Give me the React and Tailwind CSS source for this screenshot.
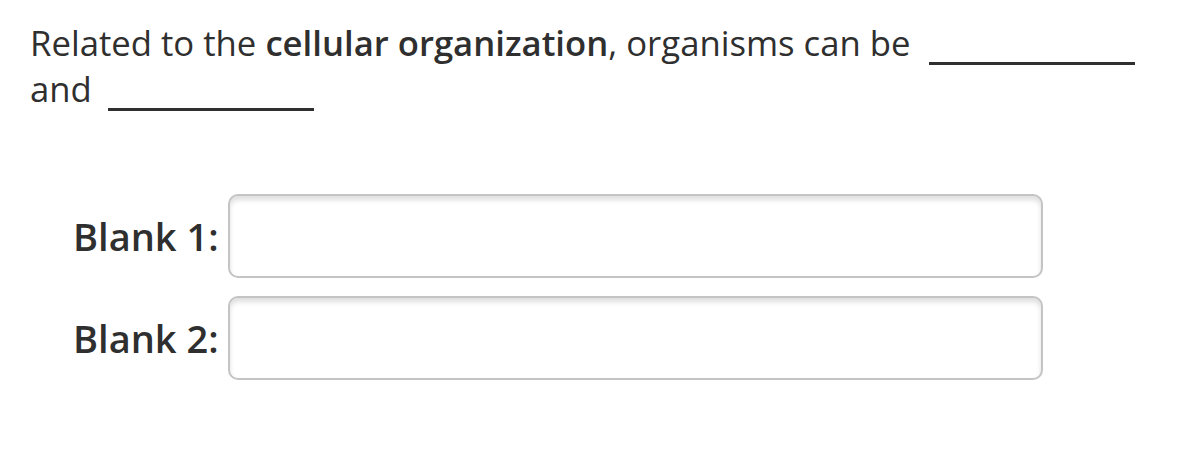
import React from "react";

const Blank = ({ className = "" }) => (
  <span
    className={`inline-block h-0 w-[206px] border-b-[3px] border-[#2f2f2f] align-[-9px] ${className}`}
  ></span>
);

const AnswerRow = ({ label }) => (
  <div className="flex items-center">
    <label className="ml-[73px] mr-[13px] w-[142px] whitespace-nowrap text-[38px] font-semibold text-[#2f2f2f]">
      {label}
    </label>
    <div className="h-[84px] w-[815px] rounded-[10px] border-2 border-[#c4c4c4] bg-white shadow-[inset_0_4px_5px_rgba(0,0,0,0.13)]"></div>
  </div>
);

const App = () => {
  return (
    <div
      className="h-[468px] w-[1200px] bg-white text-[#2f2f2f]"
      style={{ fontFamily: '"Open Sans", "Liberation Sans", sans-serif' }}
    >
      <p className="pl-[30px] pr-[50px] pt-[20px] text-[34.7px] leading-[46px]">
        Related to the <b className="font-semibold">cellular organization</b>,
        organisms can be <Blank className="ml-[9px]" /> and{" "}
        <Blank className="ml-[7px]" />
      </p>
      <div className="mt-[82px] flex flex-col gap-[18px]">
        <AnswerRow label="Blank 1:" />
        <AnswerRow label="Blank 2:" />
      </div>
    </div>
  );
};

export default App;
